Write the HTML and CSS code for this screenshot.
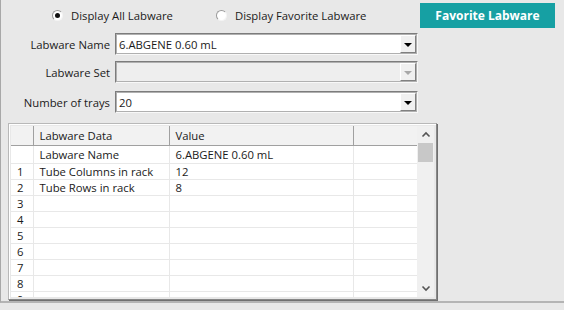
FILE: index.html
```html
<!DOCTYPE html>
<html lang="en">
<head>
    <meta charset="UTF-8">
    <title>Labware</title>
    <link rel="stylesheet" href="styles.css">
</head>
<body>
    <div class="window">
        <div class="topbar">
            <label class="radio"><span class="dot checked"></span>Display All Labware</label>
            <label class="radio fav"><span class="dot"></span>Display Favorite Labware</label>
            <button class="fav-button">Favorite Labware</button>
        </div>

        <div class="form">
            <div class="field">
                <span class="label">Labware Name</span>
                <div class="combo">
                    <span class="combo-text">6.ABGENE 0.60 mL</span>
                    <span class="combo-btn"><span class="arrow"></span></span>
                </div>
            </div>
            <div class="field">
                <span class="label">Labware Set</span>
                <div class="combo disabled">
                    <span class="combo-text"></span>
                    <span class="combo-btn"><span class="arrow"></span></span>
                </div>
            </div>
            <div class="field trays">
                <span class="label">Number of trays</span>
                <div class="combo">
                    <span class="combo-text">20</span>
                    <span class="combo-btn"><span class="arrow"></span></span>
                </div>
            </div>
        </div>

        <div class="grid">
            <div class="grid-body">
                <table>
                    <thead>
                        <tr>
                            <th class="num"></th>
                            <th class="data">Labware Data</th>
                            <th class="value">Value</th>
                            <th class="extra"></th>
                        </tr>
                    </thead>
                    <tbody>
                        <tr class="first"><td class="num"></td><td>Labware Name</td><td>6.ABGENE 0.60 mL</td><td></td></tr>
                        <tr><td class="num">1</td><td>Tube Columns in rack</td><td>12</td><td></td></tr>
                        <tr><td class="num">2</td><td>Tube Rows in rack</td><td>8</td><td></td></tr>
                        <tr><td class="num">3</td><td></td><td></td><td></td></tr>
                        <tr><td class="num">4</td><td></td><td></td><td></td></tr>
                        <tr><td class="num">5</td><td></td><td></td><td></td></tr>
                        <tr><td class="num">6</td><td></td><td></td><td></td></tr>
                        <tr><td class="num">7</td><td></td><td></td><td></td></tr>
                        <tr><td class="num">8</td><td></td><td></td><td></td></tr>
                        <tr class="partial"><td class="num">9</td><td></td><td></td><td></td></tr>
                    </tbody>
                </table>
            </div>
            <div class="scrollbar">
                <svg class="chev" width="10" height="7" viewBox="0 0 10 7"><path d="M1.5 5.5 L5 2 L8.5 5.5" fill="none" stroke="#555" stroke-width="1.6"/></svg>
                <div class="thumb"></div>
                <div class="track"></div>
                <svg class="chev" width="10" height="7" viewBox="0 0 10 7"><path d="M1.5 1.5 L5 5 L8.5 1.5" fill="none" stroke="#555" stroke-width="1.6"/></svg>
            </div>
        </div>
    </div>
</body>
</html>
```

FILE: styles.css
```css
body {
    margin: 0;
    background: #e8e8e8;
    font-family: 'Open Sans', 'Noto Sans', sans-serif;
    font-size: 11.3px;
    color: #1a1a1a;
}

.window {
    width: 564px;
    height: 303px;
    box-sizing: border-box;
    border-left: 1px solid #a8a8a8;
    border-bottom: 2px solid #b4b4b4;
    background: #e8e8e8;
}

.topbar {
    display: flex;
    align-items: center;
    height: 30px;
    padding-top: 1px;
    box-sizing: border-box;
}

.radio {
    display: flex;
    align-items: center;
    margin-left: 51px;
}

.radio.fav {
    margin-left: 43px;
}

.dot {
    width: 9px;
    height: 9px;
    border-radius: 50%;
    border: 1px solid #9a9a9a;
    border-right-color: #f4f4f4;
    border-bottom-color: #f4f4f4;
    background: #fff;
    margin-right: 8px;
    position: relative;
}

.dot.checked::after {
    content: '';
    position: absolute;
    left: 2px;
    top: 2px;
    width: 5px;
    height: 5px;
    border-radius: 50%;
    background: #111;
}

.fav-button {
    margin-left: auto;
    margin-right: 9px;
    width: 135px;
    height: 25px;
    margin-top: -1px;
    border: none;
    background: #16a0a3;
    color: #fff;
    font-family: 'Open Sans', 'Noto Sans', sans-serif;
    font-weight: bold;
    font-size: 12px;
    padding: 0;
}

.form {
    display: flex;
    flex-direction: column;
    gap: 6px;
    margin-top: 3px;
}

.field {
    display: flex;
    align-items: center;
}

.field.trays {
    margin-top: 2px;
}

.label {
    width: 109px;
    text-align: right;
    margin-right: 5px;
}

.combo {
    width: 303px;
    height: 22px;
    box-sizing: border-box;
    background: #fff;
    border: 1px solid #f8f8f8;
    border-top-color: #7c7c7c;
    border-left-color: #7c7c7c;
    outline: 1px solid #b0b0b0;
    outline-offset: -2px;
    display: flex;
    align-items: center;
}

.combo.disabled {
    background: #eeeeee;
}

.combo-text {
    flex: 1;
    padding-left: 3px;
}

.combo-btn {
    width: 16px;
    height: 18px;
    box-sizing: border-box;
    margin-right: 1px;
    background: #f0f0f0;
    border: 1px solid #fff;
    border-right-color: #808080;
    border-bottom-color: #808080;
    display: flex;
    align-items: center;
    justify-content: center;
}

.arrow {
    width: 0;
    height: 0;
    border-left: 4px solid transparent;
    border-right: 4px solid transparent;
    border-top: 4px solid #000;
    margin-top: 1px;
}

.combo.disabled .arrow {
    border-top-color: #a8a8a8;
}

.grid {
    margin: 10px 0 0 7px;
    width: 429px;
    height: 177px;
    box-sizing: border-box;
    border: 1px solid #888;
    border-top-color: #b8b8b8;
    border-left-color: #b8b8b8;
    box-shadow: inset 1px 1px 0 #fff, 1px 1px 0 #707070;
    padding: 2px;
    display: flex;
}

.grid-body {
    flex: 1;
    overflow: hidden;
    background: #fff;
}

table {
    border-collapse: collapse;
    table-layout: fixed;
    width: 408px;
}

th {
    height: 19px;
    box-sizing: border-box;
    background: #f2f2f2;
    font-weight: normal;
    text-align: left;
    padding: 0 0 0 6px;
    border-right: 1px solid #a0a0a0;
    border-bottom: 1px solid #a0a0a0;
}

th.extra {
    border-right: none;
}

th.num {
    width: 22px;
}

th.data {
    width: 136px;
}

th.value {
    width: 184px;
}

td {
    height: 16px;
    box-sizing: border-box;
    padding: 0 0 0 6px;
    border-right: 1px solid #e8e8e8;
    border-bottom: 1px solid #e8e8e8;
    line-height: 15px;
    white-space: nowrap;
}

tr.first td {
    height: 18px;
}

td.num {
    padding-left: 6px;
}

.scrollbar {
    width: 17px;
    background: #f0f0f0;
    display: flex;
    flex-direction: column;
    align-items: center;
}

.chev {
    margin: 5px 0 5px;
}

.thumb {
    width: 15px;
    height: 19px;
    background: #c8c8c8;
    margin-top: 0;
}

.track {
    flex: 1;
}
```
